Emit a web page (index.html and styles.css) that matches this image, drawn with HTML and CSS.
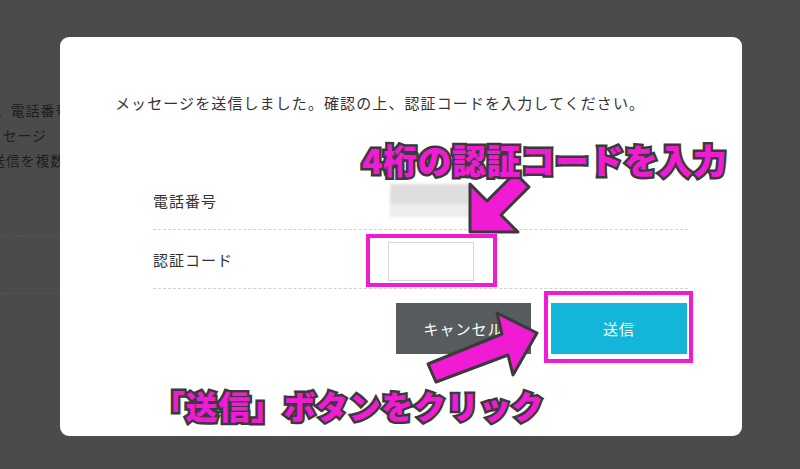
FILE: index.html
```html
<!DOCTYPE html>
<html lang="ja">
<head>
<meta charset="utf-8">
<link rel="stylesheet" href="styles.css">
</head>
<body>
<div class="page">
  <div class="bg-text t1">、電話番号</div>
  <div class="bg-text t2">ッセージ</div>
  <div class="bg-text t3">送信を複数</div>
  <div class="bg-sep s1"></div>
  <div class="bg-sep s2"></div>
</div>

<div class="modal">
  <p class="msg">メッセージを送信しました。確認の上、認証コードを入力してください。</p>
  <div class="form">
    <div class="row">
      <div class="label">電話番号</div>
      <div class="value">
        <div class="blur"><span class="b1"></span><span class="b2"></span></div>
      </div>
    </div>
    <div class="row">
      <div class="label">認証コード</div>
      <div class="value"><input class="code" type="text"></div>
    </div>
    <div class="actions">
      <button class="btn cancel">キャンセル</button>
      <button class="btn send">送信</button>
    </div>
  </div>
</div>

<div class="annot">
  <div class="hl hl-input"></div>
  <div class="hl hl-send"></div>
  <svg class="arrows" width="800" height="469" viewBox="0 0 800 469">
    <polygon points="470,232 518,232 501,215 529,187 515,173 487,201 470,184" fill="#f01cd4" stroke="#3a3a3a" stroke-width="3" stroke-linejoin="round"/>
    <polygon points="537,333 513,375 508,355 436,382 428,364 502,334 497,313" fill="#f01cd4" stroke="#3a3a3a" stroke-width="3" stroke-linejoin="round"/>
  </svg>
  <div class="callout c-top">4桁の認証コードを入力</div>
  <div class="callout c-bottom">「送信」ボタンをクリック</div>
</div>
</body>
</html>
```

FILE: styles.css
```css
* { box-sizing: border-box; }
html, body {
  margin: 0;
  padding: 0;
}
body {
  width: 800px;
  height: 469px;
  overflow: hidden;
  position: relative;
  background: #4b4b4b;
  font-family: "Noto Sans CJK JP", "Noto Sans", sans-serif;
}

/* background page (dimmed) */
.page {
  padding-top: 98px;
  width: 800px;
  height: 469px;
}
.bg-text {
  font-size: 14px;
  line-height: 25px;
  color: #1d1d1d;
  letter-spacing: 0.8px;
  white-space: nowrap;
}
.t1 { margin-left: -4px; }
.t2 { margin-left: -12px; }
.t3 { margin-left: -9px; }
.bg-sep {
  width: 80px;
  border-top: 1px dashed #575757;
}
.s1 { margin-top: 62px; }
.s2 { margin-top: 57px; }

/* modal */
.modal {
  position: absolute;
  left: 60px;
  top: 37px;
  width: 682px;
  height: 399px;
  background: #fff;
  border-radius: 9px;
  padding: 54px 0 0 55px;
}
.msg {
  margin: 0;
  font-size: 15px;
  line-height: 24px;
  letter-spacing: 1.1px;
  color: #333;
  white-space: nowrap;
}
.form {
  margin: 56px 0 0 38px;
  width: 535px;
}
.row {
  display: flex;
  align-items: center;
  height: 59px;
  border-bottom: 1px dashed #d2d2d2;
}
.label {
  width: 235px;
  font-size: 15px;
  letter-spacing: 1px;
  color: #333;
}
.blur {
  position: relative;
  width: 104px;
  height: 35px;
  filter: blur(1.5px);
}
.b1 {
  position: absolute;
  left: 2px;
  top: 1px;
  width: 80px;
  height: 20px;
  background: #dedede;
}
.b2 {
  position: absolute;
  left: 2px;
  top: 21px;
  width: 100px;
  height: 13px;
  background: #ededed;
}
.code {
  display: block;
  width: 86px;
  height: 39px;
  margin-top: 4px;
  border: 1px solid #d6d6d6;
  background: #fff;
  outline: none;
}
.actions {
  display: flex;
  justify-content: flex-end;
  gap: 20px;
  margin-top: 14px;
  padding-right: 1px;
}
.btn {
  height: 51px;
  border: 0;
  font-family: "Noto Sans CJK JP", "Noto Sans", sans-serif;
  font-size: 15px;
  letter-spacing: 1px;
  color: #fff;
}
.cancel { width: 135px; background: #565b5e; }
.send { width: 136px; background: #13b5d8; }

/* annotations */
.annot {
  position: absolute;
  left: 0;
  top: 0;
  width: 800px;
  height: 469px;
  pointer-events: none;
}
.arrows {
  position: absolute;
  left: 0;
  top: 0;
}
.hl {
  position: absolute;
  border: 4px solid #f01cd4;
}
.hl-input { left: 366px; top: 234px; width: 131px; height: 53px; }
.hl-send { left: 544px; top: 291px; width: 149px; height: 72px; }
.callout {
  position: absolute;
  font-family: "Noto Sans CJK JP", sans-serif;
  font-weight: 900;
  color: #f01cd4;
  -webkit-text-stroke: 5px #3a3a3a;
  paint-order: stroke fill;
  white-space: nowrap;
}
.c-top {
  left: 362px;
  top: 143px;
  font-size: 34px;
  line-height: 34px;
  letter-spacing: 0.4px;
}
.c-bottom {
  left: 153px;
  top: 389px;
  font-size: 32px;
  line-height: 32px;
  letter-spacing: 0.6px;
}
```
